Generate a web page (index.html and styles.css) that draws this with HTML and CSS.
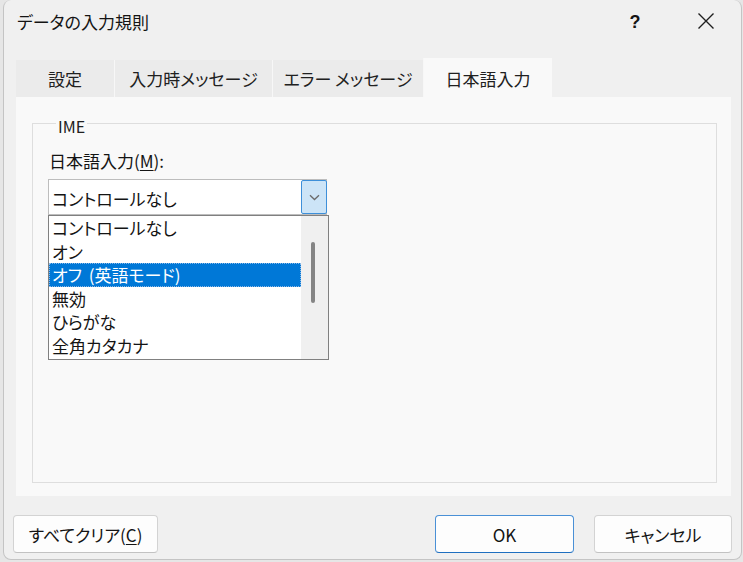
FILE: index.html
```html
<!DOCTYPE html>
<html lang="ja">
<head>
<meta charset="utf-8">
<title>データの入力規則</title>
<link rel="stylesheet" href="styles.css">
</head>
<body>
<div class="dialog">
  <div class="titlebar">
    <span class="title">データの入力規則</span>
    <span class="help">?</span>
    <span class="close"><svg width="18" height="18" viewBox="0 0 18 18"><path d="M1.5 1.5 L16.5 16.5 M16.5 1.5 L1.5 16.5" stroke="#1f1f1f" stroke-width="1.4" fill="none"/></svg></span>
  </div>
  <div class="tabs">
    <div class="tab t1">設定</div>
    <div class="tab t2">入力時メッセージ</div>
    <div class="tab t3">エラー メッセージ</div>
    <div class="tab t4 active">日本語入力</div>
  </div>
  <div class="panel">
    <fieldset class="group">
      <legend class="legend">IME</legend>
      <div class="field-label">日本語入力(<u>M</u>):</div>
      <div class="combo-wrap">
        <div class="combo">
          <span class="combo-text">コントロールなし</span>
          <span class="combo-btn"><svg width="11" height="7" viewBox="0 0 11 7"><path d="M1 1.2 L5.5 5.5 L10 1.2" stroke="#6b6b6b" stroke-width="1.3" fill="none"/></svg></span>
        </div>
        <div class="dropdown">
          <div class="items">
            <div class="item">コントロールなし</div>
            <div class="item">オン</div>
            <div class="item selected">オフ (英語モード)</div>
            <div class="item">無効</div>
            <div class="item">ひらがな</div>
            <div class="item">全角カタカナ</div>
          </div>
          <div class="scrollbar"><div class="thumb"></div></div>
        </div>
      </div>
    </fieldset>
  </div>
  <div class="buttons">
    <button class="btn clear">すべてクリア(<u>C</u>)</button>
    <div class="spacer"></div>
    <button class="btn ok">OK</button>
    <button class="btn cancel">キャンセル</button>
  </div>
</div>
</body>
</html>
```
FILE: styles.css
```css
* { box-sizing: border-box; }
html, body { margin: 0; padding: 0; }
body {
  width: 743px;
  height: 562px;
  overflow: hidden;
  background: #e6e6e6;
  font-family: "Noto Sans CJK JP", "Noto Sans", sans-serif;
  font-feature-settings: "palt";
  color: #141414;
}
.dialog {
  margin-left: 3px;
  width: 739px;
  height: 560px;
  background: #f0f0f0;
  border: 1px solid #c4c4c4;
  border-top: none;
  border-radius: 8px;
  display: flex;
  flex-direction: column;
}
.titlebar {
  height: 44px;
  display: flex;
  align-items: center;
  padding-left: 13px;
}
.title {
  font-size: 17px;
  line-height: 20px;
  flex: 1;
}
.help {
  font-family: "Liberation Sans", sans-serif;
  font-size: 18px;
  font-weight: 600;
  width: 20px;
  text-align: center;
  margin-right: 52px;
}
.close {
  display: flex;
  margin-right: 26px;
  margin-top: -2px;
}
.tabs {
  margin-top: 14px;
  margin-left: 12px;
  height: 39px;
  display: flex;
  align-items: flex-end;
}
.tab {
  height: 37px;
  background: #ebebeb;
  border-left: 1px solid #f7f7f7;
  font-size: 17px;
  display: flex;
  align-items: center;
  justify-content: center;
  color: #202020;
}
.t1 { width: 98px; border-left: none; }
.t2 { width: 158px; }
.t3 { width: 151px; }
.t4 { width: 129px; }
.tab.active {
  height: 39px;
  background: #f9f9f9;
  padding-top: 2px;
}
.panel {
  margin-left: 12px;
  margin-right: 10px;
  height: 399px;
  background: #f9f9f9;
  padding: 15px 14px 13px 16px;
  display: flex;
  flex-direction: column;
}
.group {
  flex: 1;
  margin: 0;
  min-width: 0;
  border: 1px solid #dedede;
  padding: 15px 0 0 15px;
}
.legend {
  margin-left: 8px;
  padding: 6px 2px 0 2px;
  font-size: 16px;
  line-height: 16px;
  color: #202020;
}
.field-label {
  font-size: 17px;
  line-height: 24px;
  margin-left: 1px;
}
.field-label u { text-underline-offset: 2px; }
.combo-wrap {
  position: relative;
  margin-top: 6px;
  width: 279px;
}
.combo {
  height: 36px;
  background: #ffffff;
  border: 1px solid #bdbdbd;
  display: flex;
  align-items: stretch;
}
.combo-text {
  flex: 1;
  font-size: 17px;
  padding-left: 3px;
  display: flex;
  align-items: center;
  padding-top: 2px;
}
.combo-btn {
  width: 26px;
  background: #cce4f7;
  border: 1px solid #3d8fd9;
  border-radius: 2px;
  display: flex;
  align-items: center;
  justify-content: center;
  margin-right: -1px;
}
.dropdown {
  position: absolute;
  top: 36px;
  left: 0;
  width: 281px;
  height: 145px;
  background: #ffffff;
  border: 1px solid #808080;
  display: flex;
}
.items {
  flex: 1;
}
.item {
  height: 23.5px;
  line-height: 23.5px;
  font-size: 17px;
  padding-left: 3px;
  white-space: nowrap;
}
.item.selected {
  background: #0078d7;
  color: #ffffff;
  outline: 1px dotted #8ab8e6;
  outline-offset: -1px;
  word-spacing: 3px;
}
.scrollbar {
  width: 27px;
  background: #f0f0f0;
  padding-top: 26px;
  padding-left: 10px;
}
.thumb {
  width: 4px;
  height: 61px;
  background: #858585;
  border-radius: 2px;
}
.buttons {
  margin-top: 19px;
  display: flex;
  padding-left: 9px;
  padding-right: 9px;
  gap: 20px;
}
.spacer { flex: 1; }
.btn {
  height: 38px;
  background: #fdfdfd;
  border: 1px solid #d3d3d3;
  border-bottom-color: #c2c2c2;
  border-radius: 4px;
  font-family: "Noto Sans CJK JP", "Noto Sans", sans-serif;
  font-feature-settings: "palt";
  font-size: 17px;
  color: #141414;
  padding: 0;
}
.btn u { text-underline-offset: 2px; }
.clear { width: 145px; }
.ok { width: 139px; border: 1px solid #4a90d6; border-bottom-color: #1f6fc0; }
.cancel { width: 138px; }
```
